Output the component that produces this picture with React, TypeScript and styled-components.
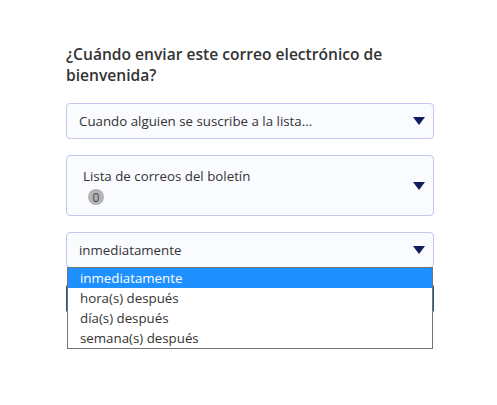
import styled, { createGlobalStyle } from 'styled-components';

const GlobalStyle = createGlobalStyle`
  html, body {
    margin: 0;
    padding: 0;
    background: #ffffff;
    font-family: 'Open Sans', 'Noto Sans', sans-serif;
  }
`;

const Page = styled.main`
  width: 497px;
  height: 405px;
  padding: 44px 0 0 66px;
  box-sizing: border-box;
`;

const Form = styled.div`
  width: 368px;
  display: flex;
  flex-direction: column;
  gap: 16px;
`;

const Question = styled.h2`
  margin: 0 0 1px;
  font-size: 15.6px;
  font-weight: 600;
  line-height: 21px;
  color: #333333;
`;

const SelectBox = styled.div<{ $tall?: boolean }>`
  position: relative;
  height: ${(p) => (p.$tall ? '61px' : '36px')};
  box-sizing: border-box;
  border: 1px solid #c3c8ee;
  border-radius: 4px;
  background: #fafbff;
  display: flex;
  align-items: center;
  justify-content: space-between;
  padding: ${(p) => (p.$tall ? '0 8px 0 16px' : '0 8px 0 12px')};
  color: #333333;
  font-size: 13.3px;
`;

const ListLabel = styled.div`
  display: flex;
  flex-direction: column;
  align-items: flex-start;
  gap: 4px;
  padding-top: 1px;
`;

const Badge = styled.span`
  width: 16px;
  height: 16px;
  margin-left: 5px;
  border-radius: 50%;
  background: #b4b4b4;
  color: #444444;
  font-size: 12px;
  display: flex;
  align-items: center;
  justify-content: center;
`;

const Caret = styled.svg`
  width: 12px;
  height: 8px;
  flex-shrink: 0;
`;

const Options = styled.ul`
  position: absolute;
  top: 34px;
  left: 0;
  width: 364px;
  margin: 0;
  padding: 0;
  list-style: none;
  background: #ffffff;
  border: 1px solid #767676;
  z-index: 2;
`;

const Option = styled.li<{ $active?: boolean }>`
  height: 20px;
  line-height: 20px;
  padding-left: 12px;
  font-size: 13.3px;
  color: ${(p) => (p.$active ? '#ffffff' : '#333333')};
  background: ${(p) => (p.$active ? '#1e90ff' : 'transparent')};
`;

const SubmitButton = styled.button`
  height: 29px;
  border: 1px solid #23527c;
  border-radius: 3px;
  background: #337ab7;
  color: #ffffff;
  font-family: inherit;
  font-size: 13px;
`;

function CaretIcon() {
  return (
    <Caret viewBox="0 0 12 8" aria-hidden>
      <path d="M0 0h12L6 8z" fill="#111a5e" />
    </Caret>
  );
}

const delays = ['inmediatamente', 'hora(s) después', 'día(s) después', 'semana(s) después'];

export default function App() {
  return (
    <>
      <GlobalStyle />
      <Page>
        <Form>
          <Question>¿Cuándo enviar este correo electrónico de bienvenida?</Question>

          <SelectBox>
            <span>Cuando alguien se suscribe a la lista...</span>
            <CaretIcon />
          </SelectBox>

          <SelectBox $tall>
            <ListLabel>
              <span>Lista de correos del boletín</span>
              <Badge>0</Badge>
            </ListLabel>
            <CaretIcon />
          </SelectBox>

          <SelectBox>
            <span>inmediatamente</span>
            <CaretIcon />
            <Options>
              {delays.map((d, i) => (
                <Option key={d} $active={i === 0}>
                  {d}
                </Option>
              ))}
            </Options>
          </SelectBox>

          <SubmitButton>Guardar</SubmitButton>
        </Form>
      </Page>
    </>
  );
}
